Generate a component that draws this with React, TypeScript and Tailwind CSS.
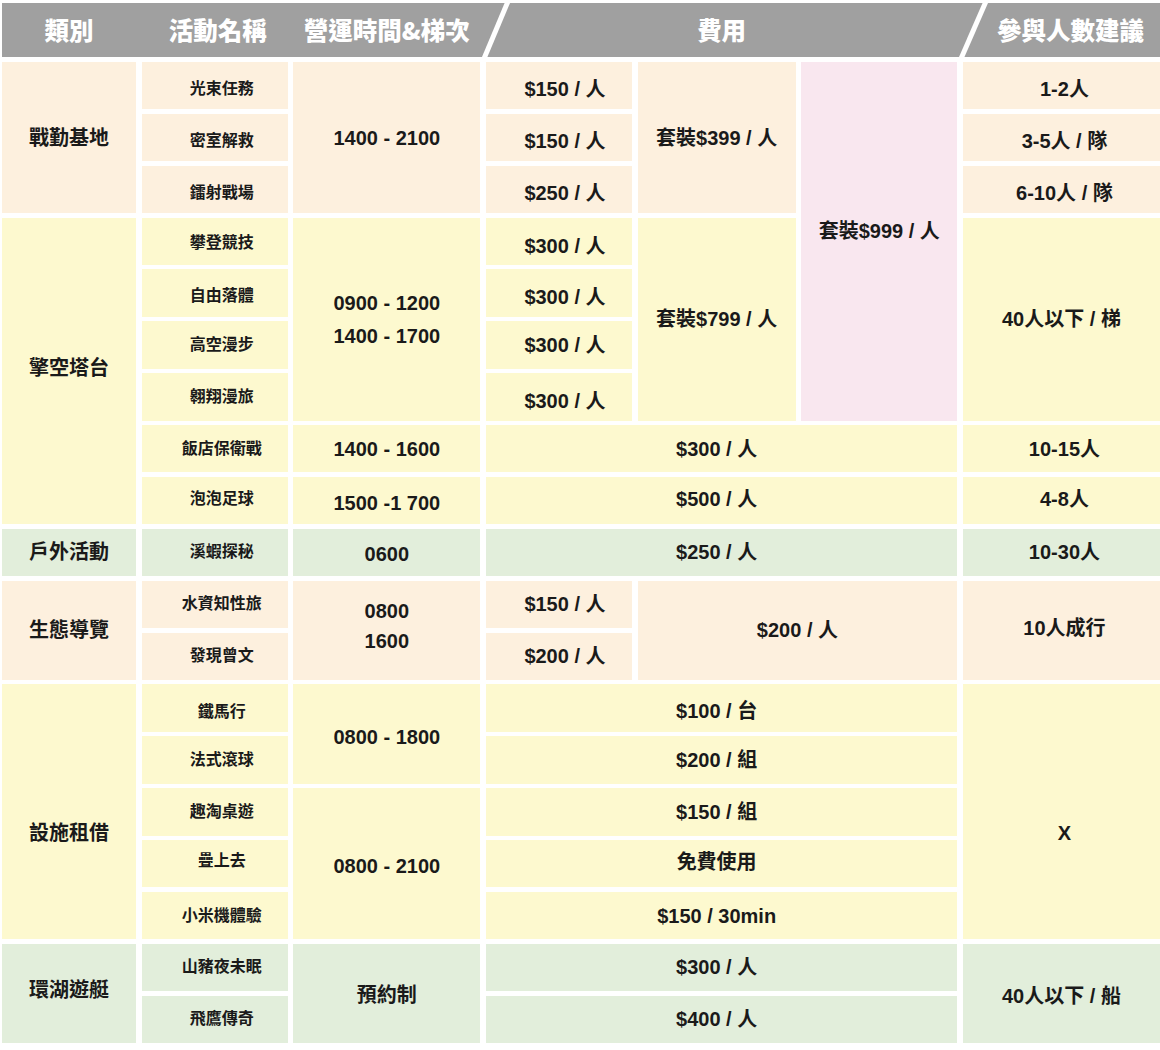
import React from "react";

const PEACH = "bg-[#fdf0de]";
const YELLOW = "bg-[#fdf9cf]";
const GREEN = "bg-[#e2eedb]";
const PINK = "bg-[#f9e7ef]";

const LABEL = "text-[20px]";
const NAME = "text-[16px] pl-[14px]";
const NUM = "text-[20px]";
const P4 = "text-[20px] pl-[12px]";
const P46 = "text-[20px] pr-[10px]";

type CellDef = { a: string; bg: string; s: string; t: React.ReactNode; extra?: string };

const cells: CellDef[] = [
  // Group 1
  { a: "[grid-area:1/1/4/2]", bg: PEACH, s: LABEL, t: "戰勤基地" },
  { a: "[grid-area:1/2/2/3]", bg: PEACH, s: NAME, t: "光束任務", extra: "pt-[7px]" },
  { a: "[grid-area:2/2/3/3]", bg: PEACH, s: NAME, t: "密室解救", extra: "pt-[6px]" },
  { a: "[grid-area:3/2/4/3]", bg: PEACH, s: NAME, t: "鐳射戰場", extra: "pt-[7px]" },
  { a: "[grid-area:1/3/4/4]", bg: PEACH, s: NUM, t: "1400 - 2100" },
  { a: "[grid-area:1/4/2/5]", bg: PEACH, s: P4, t: "$150 / 人", extra: "pt-[7px]" },
  { a: "[grid-area:2/4/3/5]", bg: PEACH, s: P4, t: "$150 / 人", extra: "pt-[6px]" },
  { a: "[grid-area:3/4/4/5]", bg: PEACH, s: P4, t: "$250 / 人", extra: "pt-[7px]" },
  { a: "[grid-area:1/5/4/6]", bg: PEACH, s: NUM, t: "套裝$399 / 人" },
  { a: "[grid-area:1/6/8/7]", bg: PINK, s: NUM, t: "套裝$999 / 人", extra: "pb-[20px]" },
  { a: "[grid-area:1/7/2/8]", bg: PEACH, s: NUM, t: "1-2人", extra: "pt-[7px] pl-[6px]" },
  { a: "[grid-area:2/7/3/8]", bg: PEACH, s: NUM, t: "3-5人 / 隊", extra: "pt-[6px] pl-[6px]" },
  { a: "[grid-area:3/7/4/8]", bg: PEACH, s: NUM, t: "6-10人 / 隊", extra: "pt-[7px] pl-[6px]" },
  // Group 2
  { a: "[grid-area:4/1/10/2]", bg: YELLOW, s: LABEL, t: "擎空塔台", extra: "pb-[6px]" },
  { a: "[grid-area:4/2/5/3]", bg: YELLOW, s: NAME, t: "攀登競技", extra: "pt-[4px]" },
  { a: "[grid-area:5/2/6/3]", bg: YELLOW, s: NAME, t: "自由落體", extra: "pt-[6px]" },
  { a: "[grid-area:6/2/7/3]", bg: YELLOW, s: NAME, t: "高空漫步" },
  { a: "[grid-area:7/2/8/3]", bg: YELLOW, s: NAME, t: "翱翔漫旅" },
  { a: "[grid-area:8/2/9/3]", bg: YELLOW, s: NAME, t: "飯店保衛戰" },
  { a: "[grid-area:9/2/10/3]", bg: YELLOW, s: NAME, t: "泡泡足球", extra: "pb-[4px]" },
  {
    a: "[grid-area:4/3/8/4]",
    bg: YELLOW,
    s: NUM,
    t: (
      <div className="flex flex-col gap-[13px]">
        <span>0900 - 1200</span>
        <span>1400 - 1700</span>
      </div>
    ),
  },
  { a: "[grid-area:8/3/9/4]", bg: YELLOW, s: NUM, t: "1400 - 1600" },
  { a: "[grid-area:9/3/10/4]", bg: YELLOW, s: NUM, t: "1500 -1 700", extra: "pt-[4px]" },
  { a: "[grid-area:4/4/5/5]", bg: YELLOW, s: P4, t: "$300 / 人", extra: "pt-[9px]" },
  { a: "[grid-area:5/4/6/5]", bg: YELLOW, s: P4, t: "$300 / 人", extra: "pt-[8px]" },
  { a: "[grid-area:6/4/7/5]", bg: YELLOW, s: P4, t: "$300 / 人" },
  { a: "[grid-area:7/4/8/5]", bg: YELLOW, s: P4, t: "$300 / 人", extra: "pt-[8px]" },
  { a: "[grid-area:4/5/8/6]", bg: YELLOW, s: NUM, t: "套裝$799 / 人" },
  { a: "[grid-area:4/7/8/8]", bg: YELLOW, s: NUM, t: "40人以下 / 梯" },
  { a: "[grid-area:8/4/9/7]", bg: YELLOW, s: P46, t: "$300 / 人" },
  { a: "[grid-area:9/4/10/7]", bg: YELLOW, s: P46, t: "$500 / 人", extra: "pb-[4px]" },
  { a: "[grid-area:8/7/9/8]", bg: YELLOW, s: NUM, t: "10-15人", extra: "pl-[6px]" },
  { a: "[grid-area:9/7/10/8]", bg: YELLOW, s: NUM, t: "4-8人", extra: "pb-[4px] pl-[6px]" },
  // Group 3
  { a: "[grid-area:10/1/11/2]", bg: GREEN, s: LABEL, t: "戶外活動" },
  { a: "[grid-area:10/2/11/3]", bg: GREEN, s: NAME, t: "溪蝦探秘" },
  { a: "[grid-area:10/3/11/4]", bg: GREEN, s: NUM, t: "0600", extra: "pt-[4px]" },
  { a: "[grid-area:10/4/11/7]", bg: GREEN, s: P46, t: "$250 / 人" },
  { a: "[grid-area:10/7/11/8]", bg: GREEN, s: NUM, t: "10-30人", extra: "pl-[6px]" },
  // Group 4
  { a: "[grid-area:11/1/13/2]", bg: PEACH, s: LABEL, t: "生態導覽" },
  { a: "[grid-area:11/2/12/3]", bg: PEACH, s: NAME, t: "水資知性旅" },
  { a: "[grid-area:12/2/13/3]", bg: PEACH, s: NAME, t: "發現曾文" },
  {
    a: "[grid-area:11/3/13/4]",
    bg: PEACH,
    s: NUM,
    t: (
      <div className="flex flex-col gap-[10px]">
        <span>0800</span>
        <span>1600</span>
      </div>
    ),
    extra: "pb-[8px]",
  },
  { a: "[grid-area:11/4/12/5]", bg: PEACH, s: P4, t: "$150 / 人" },
  { a: "[grid-area:12/4/13/5]", bg: PEACH, s: P4, t: "$200 / 人" },
  { a: "[grid-area:11/5/13/7]", bg: PEACH, s: NUM, t: "$200 / 人" },
  { a: "[grid-area:11/7/13/8]", bg: PEACH, s: NUM, t: "10人成行", extra: "pb-[4px] pl-[6px]" },
  // Group 5
  { a: "[grid-area:13/1/18/2]", bg: YELLOW, s: LABEL, t: "設施租借", extra: "pt-[42px]" },
  { a: "[grid-area:13/2/14/3]", bg: YELLOW, s: NAME, t: "鐵馬行", extra: "pt-[7px]" },
  { a: "[grid-area:14/2/15/3]", bg: YELLOW, s: NAME, t: "法式滾球" },
  { a: "[grid-area:15/2/16/3]", bg: YELLOW, s: NAME, t: "趣淘桌遊" },
  { a: "[grid-area:16/2/17/3]", bg: YELLOW, s: NAME, t: "疊上去", extra: "pb-[5px]" },
  { a: "[grid-area:17/2/18/3]", bg: YELLOW, s: NAME, t: "小米機體驗" },
  { a: "[grid-area:13/3/15/4]", bg: YELLOW, s: NUM, t: "0800 - 1800", extra: "pt-[6px]" },
  { a: "[grid-area:15/3/18/4]", bg: YELLOW, s: NUM, t: "0800 - 2100", extra: "pt-[4px]" },
  { a: "[grid-area:13/4/14/7]", bg: YELLOW, s: P46, t: "$100 / 台", extra: "pt-[5px]" },
  { a: "[grid-area:14/4/15/7]", bg: YELLOW, s: P46, t: "$200 / 組" },
  { a: "[grid-area:15/4/16/7]", bg: YELLOW, s: P46, t: "$150 / 組" },
  { a: "[grid-area:16/4/17/7]", bg: YELLOW, s: P46, t: "免費使用", extra: "pb-[3px]" },
  { a: "[grid-area:17/4/18/7]", bg: YELLOW, s: P46, t: "$150 / 30min" },
  { a: "[grid-area:13/7/18/8]", bg: YELLOW, s: NUM, t: "X", extra: "pt-[42px] pl-[6px]" },
  // Group 6
  { a: "[grid-area:18/1/20/2]", bg: GREEN, s: LABEL, t: "環湖遊艇", extra: "pb-[6px]" },
  { a: "[grid-area:18/2/19/3]", bg: GREEN, s: NAME, t: "山豬夜未眠" },
  { a: "[grid-area:19/2/20/3]", bg: GREEN, s: NAME, t: "飛鷹傳奇" },
  { a: "[grid-area:18/3/20/4]", bg: GREEN, s: NUM, t: "預約制", extra: "pt-[4px]" },
  { a: "[grid-area:18/4/19/7]", bg: GREEN, s: P46, t: "$300 / 人" },
  { a: "[grid-area:19/4/20/7]", bg: GREEN, s: P46, t: "$400 / 人" },
  { a: "[grid-area:18/7/20/8]", bg: GREEN, s: NUM, t: "40人以下 / 船", extra: "pt-[6px]" },
];

export default function App() {
  return (
    <div className="w-[1160px] h-[1050px] bg-white [font-family:'Liberation_Sans','Noto_Sans_CJK_TC',sans-serif] text-[#1a1a1a]">
      <div className="relative mt-[3px] ml-[2px] w-[1158px] h-[54px] bg-[#a0a0a0] grid grid-cols-[134px_146px_187px_146px_158px_156px_197px] gap-x-[5.67px] items-center text-white text-[24.5px] font-black [font-family:'Noto_Sans_CJK_TC',sans-serif]">
        <div className="text-center">類別</div>
        <div className="text-center pl-[6px]">活動名稱</div>
        <div className="text-center whitespace-nowrap">營運時間&amp;梯次</div>
        <div className="col-span-3 text-center">費用</div>
        <div className="text-center pl-[18px] whitespace-nowrap">參與人數建議</div>
        <svg className="absolute left-0 top-0" width="1158" height="54" viewBox="0 0 1158 54">
          <line x1="481" y1="58" x2="507" y2="-4" stroke="#ffffff" strokeWidth="5" />
          <line x1="958" y1="58" x2="985" y2="-4" stroke="#ffffff" strokeWidth="5" />
        </svg>
      </div>
      <div className="mt-[5px] ml-[2px] w-[1158px] h-[981px] grid grid-cols-[134px_146px_187px_146px_158px_156px_197px] grid-rows-[repeat(19,minmax(0,1fr))] gap-x-[5.67px] gap-y-[4.5px] font-bold">
        {cells.map((c, i) => (
          <div
            key={i}
            className={`flex items-center justify-center text-center leading-none ${c.a} ${c.bg} ${c.s} ${c.extra ?? ""}`}
          >
            {c.t}
          </div>
        ))}
      </div>
    </div>
  );
}
